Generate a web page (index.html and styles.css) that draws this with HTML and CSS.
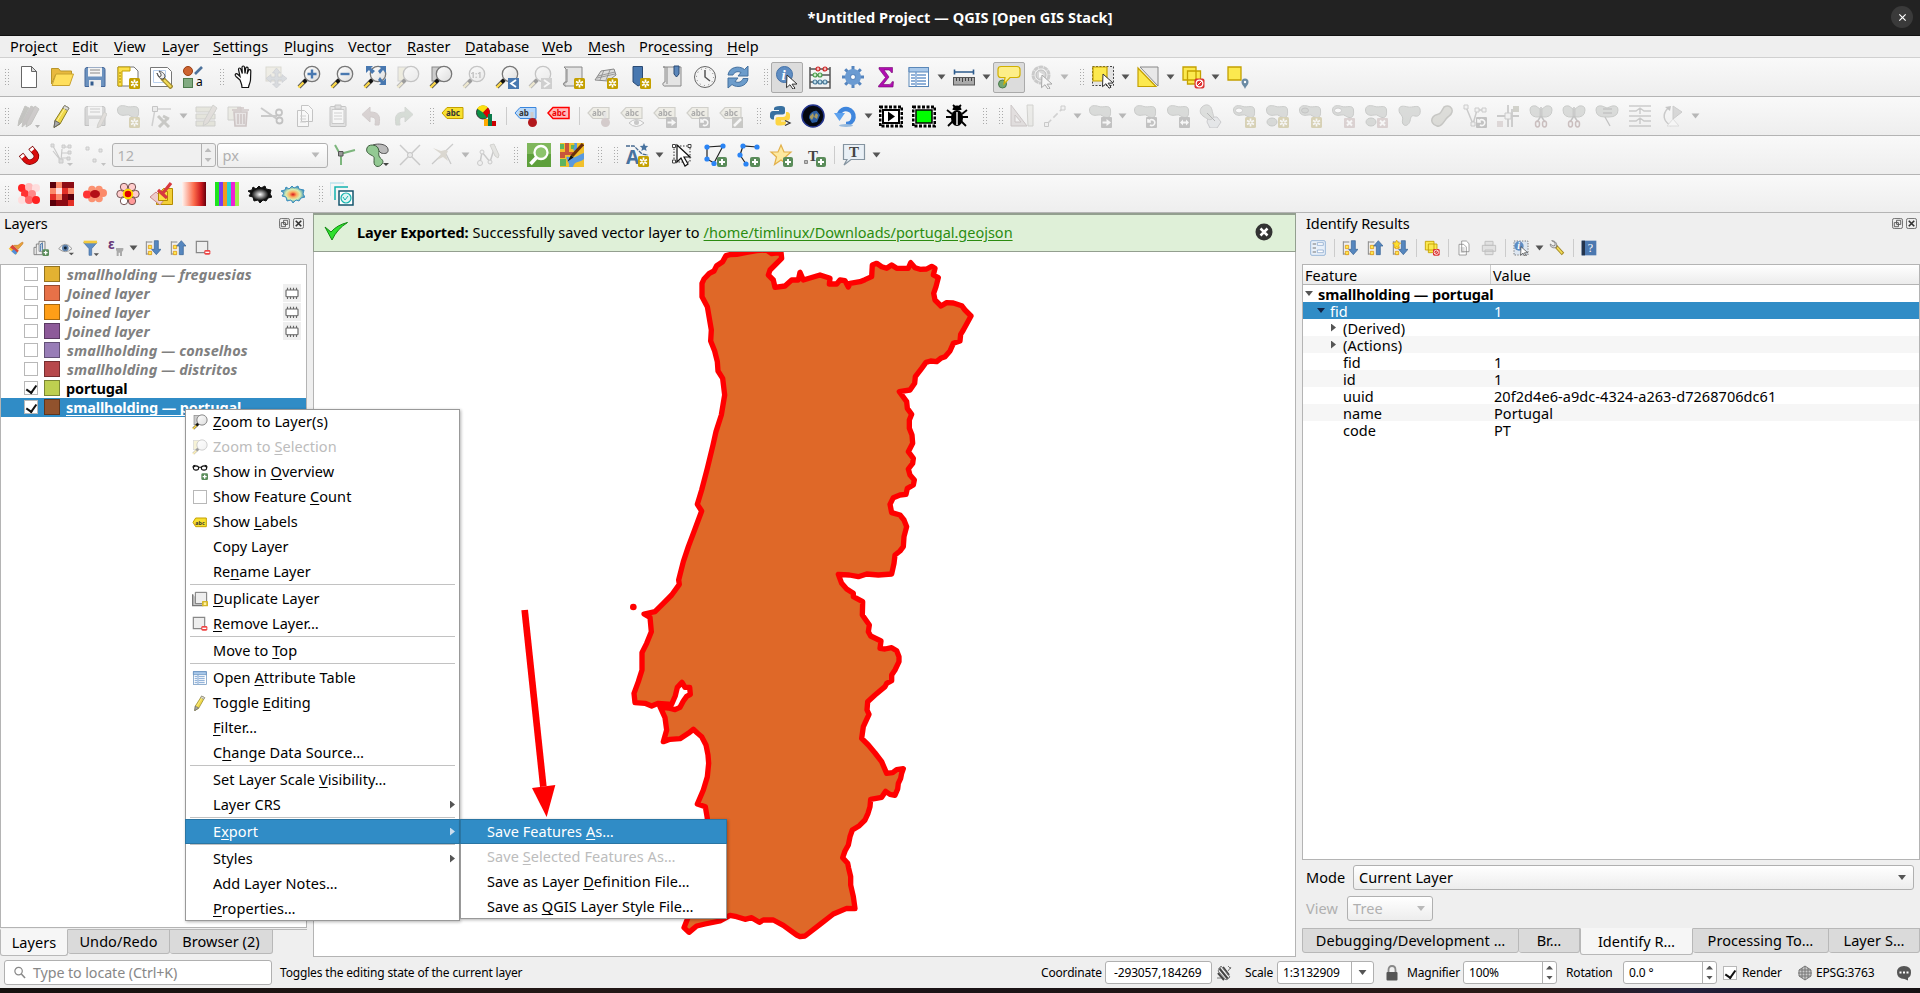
FILE: index.html
```html
<!DOCTYPE html>
<html lang="en">
<head>
<meta charset="utf-8">
<title>*Untitled Project — QGIS [Open GIS Stack]</title>
<link rel="stylesheet" href="styles.css">
</head>
<body>
<svg class="defs" width="0" height="0">
<defs>
<linearGradient id="lens" x1="0" y1="0" x2="1" y2="1"><stop offset="0" stop-color="#fff"/><stop offset="1" stop-color="#ddd"/></linearGradient>
<linearGradient id="reds"><stop offset="0" stop-color="#fff5f0"/><stop offset=".5" stop-color="#fb6a4a"/><stop offset=".8" stop-color="#cb181d"/><stop offset="1" stop-color="#67000d"/></linearGradient>
<radialGradient id="heat"><stop offset="0" stop-color="#d7191c"/><stop offset=".3" stop-color="#fdae61"/><stop offset=".6" stop-color="#d8eeb0"/><stop offset="1" stop-color="#2b83ba"/></radialGradient>
<radialGradient id="heatg"><stop offset="0" stop-color="#fff"/><stop offset=".35" stop-color="#888"/><stop offset=".7" stop-color="#111"/></radialGradient>
<g id="lensg"><path d="M9 15 2 22" stroke="#555" stroke-width="4"/><path d="M8 16 1.5 22.5" stroke="#fcd94a" stroke-width="2.4"/><path d="M9.500 14.500 6.500 17.500" stroke="#111" stroke-width="3.500"/><circle cx="15" cy="9" r="7.700" fill="url(#lens)" stroke="#777" stroke-width="1.300"/></g>
<g id="star"><rect x="13" y="13" width="11" height="11" rx="1.500" fill="#c4a000"/><path d="M18.500 14.500v8M15 16.500l7 4M22 16.500l-7 4" stroke="#fff" stroke-width="1.700"/><circle cx="18.500" cy="18.500" r="1.100" fill="#c4a000"/></g>
<g id="plus"><rect x="14" y="14" width="10" height="10" rx="2" fill="#5a8c5a"/><path d="M19 16v6M16 19h6" stroke="#fff" stroke-width="2"/></g>
<g id="bx"><rect x="13" y="14" width="11" height="10" rx="1" fill="#c99"/><path d="M16 16.500l5 5M21 16.500l-5 5" stroke="#fff" stroke-width="2"/></g>
<g id="bar"><rect x="13" y="13" width="11" height="11" rx="1" fill="#777"/><path d="M14.500 17.500h4V15l4.500 3.500L18.500 22v-2.500h-4z" fill="#fff"/></g>
<g id="blr"><rect x="13" y="13" width="11" height="11" rx="1" fill="#777"/><path d="M14 18.500l3-3v2h3v-2l3 3-3 3v-2h-3v2z" fill="#fff"/></g>
<g id="brot"><rect x="13" y="13" width="11" height="11" rx="1" fill="#777"/><path d="M16 17.500a3 3 0 1 1 1 3.500M15 15v3h3" fill="none" stroke="#fff" stroke-width="1.600"/></g>
<g id="blob"><path d="M1.500 6C1.500 1 7 1 11 2.500S22 0 22.500 6s-1 8-4.500 7.500S14 10 10 11s-8.500 0-8.500-5z" fill="#aab3aa" stroke="#808880"/></g>
<g id="cur"><path d="M12 10l10 9-5 .2 3 4-2 1-3-4.500-3.500 3z" fill="#fff" stroke="#333" stroke-width="1"/></g>
<g id="tag"><path d="M1 7l5-5.500h16v11H6z" fill="#e8e2b8" stroke="#999577" stroke-width="1.200"/><text x="5" y="10" class="abc">abc</text></g>
<symbol id="new" viewBox="0 0 24 24"><path d="M4.500 1.500h10l5 5v16h-15z" fill="#fff" stroke="#666"/><path d="M14.500 1.500v5h5z" fill="#ddd" stroke="#666"/></symbol>
<symbol id="open" viewBox="0 0 24 24"><path d="M1.500 3.500h7l2 2.500h11v4h-16l-4 9z" fill="#e8b93e" stroke="#b8952a"/><path d="M6 9h17.500L19.500 20.500H2z" fill="#ffdf5d" stroke="#c9a22e"/></symbol>
<symbol id="save" viewBox="0 0 24 24"><path d="M2 4.500q0-2 2-2h16q2 0 2 2v17H2z" fill="#6c92bf" stroke="#47689a"/><path d="M5 2.500h14v9H5z" fill="#f4f4f4"/><path d="M7 5h10M7 8h10" stroke="#888"/><path d="M6 15h12v7H6z" fill="#eee"/><path d="M7.500 16.500h3v4h-3z" fill="#335c8f"/></symbol>
<symbol id="newlay" viewBox="0 0 24 24"><path d="M2 2h16l4 4v15H2z" fill="#fff" stroke="#777"/><path d="M2 2h12v4H6v15H2z" fill="#fce04d" stroke="#c4a000"/><path d="M3 8h2M3 11h2M3 14h2M3 17h2" stroke="#a68500"/><use href="#star"/></symbol>
<symbol id="laymgr" viewBox="0 0 24 24"><path d="M1.500 2.500h17l4 4v15h-21z" fill="#fff" stroke="#777"/><path d="M4.500 5.500h12v12h-12z" fill="none" stroke="#b9d0ee"/><path d="M13 13l10 10" stroke="#a08a30" stroke-width="4.500"/><path d="M15 15l7 7" stroke="#f2dc58" stroke-width="2.200"/><path d="M8 8c1 4 3 6 6 6l2-2c0-3-2-5-6-6l2 3v2l-2 1z" fill="#eee" stroke="#555"/></symbol>
<symbol id="style" viewBox="0 0 24 24"><circle cx="6" cy="6" r="4.500" fill="#cd6430" stroke="#9a3e12"/><rect x="1.500" y="13.500" width="9" height="9" fill="#82ab82" stroke="#4c7a4c"/><path d="M13 9l7-7" stroke="#4e739c" stroke-width="2.600"/><text x="14" y="21" class="t11">a</text></symbol>
<symbol id="hand" viewBox="0 0 24 24"><path d="M9 15 5 11.500c-2-2 0-4 2-2l2 2L7.500 4.500c0-2 2-2 2.500 0l1.300 4-.3-6c0-2 2.500-2 2.500 0l.5 6 .8-5.500c.3-1.500 2.500-1 2.300.5L16 9l1.500-3.500c.6-1.500 2.500-1 2.300.8L19.500 15c-.5 4-1.500 4-2 7.500H11C11 19 10 18 9 15z" fill="#fff" stroke="#111" stroke-width="1.200"/></symbol>
<symbol id="panmap" viewBox="0 0 24 24"><rect x="2" y="2" width="15" height="14" fill="#eae2b5" stroke="#b5ad86"/><path d="M12.500 3l4 5h-2.500v4h4V9.500l5 4-5 4V15h-4v4h2.500l-4 4-4-4H11v-4H7v2.500l-5-4 5-4V12h4V8H8.500z" fill="#aab8cc" stroke="#8794ab" stroke-width=".7"/></symbol>
<symbol id="zin" viewBox="0 0 24 24"><use href="#lensg"/><path d="M15 4.500v9M10.500 9h9" stroke="#4878b0" stroke-width="2.400"/></symbol>
<symbol id="zout" viewBox="0 0 24 24"><use href="#lensg"/><path d="M10.500 9h9" stroke="#4878b0" stroke-width="2.400"/></symbol>
<symbol id="zfull" viewBox="0 0 24 24"><use href="#lensg"/><path d="M3 1h7L8 3l4 3-3 3-3-4-3 3zM23 1h-7l2 2-3 3 2 3 3-4 3 3zM23 20h-7l2-2-3-3 2-3 3 4 3-3z" fill="#4878b0"/></symbol>
<symbol id="zsel" viewBox="0 0 24 24"><rect x="2" y="2" width="12" height="14" fill="#eadf9a" stroke="#999"/><use href="#lensg"/></symbol>
<symbol id="zlay" viewBox="0 0 24 24"><rect x="3" y="2" width="12" height="14" fill="#ccc" stroke="#888"/><use href="#lensg"/></symbol>
<symbol id="znat" viewBox="0 0 24 24"><use href="#lensg"/><text x="8.500" y="12.500" class="b9">1:1</text></symbol>
<symbol id="zlast" viewBox="0 0 24 24"><use href="#lensg"/><rect x="13" y="13" width="11" height="11" fill="#4878b0"/><path d="M21 15l-5 3.500 5 3.500" fill="none" stroke="#fff" stroke-width="1.800"/></symbol>
<symbol id="znext" viewBox="0 0 24 24"><use href="#lensg"/><rect x="13" y="13" width="11" height="11" fill="#999"/><path d="M16 15l5 3.500-5 3.500" fill="none" stroke="#fff" stroke-width="1.800"/></symbol>
<symbol id="newmap" viewBox="0 0 24 24"><path d="M3 2h18v19H6c-4 1-5-4-1-4V4z" fill="#e4e4e4" stroke="#888"/><path d="M6 4v13c-4 0-4 4-1 4" fill="#ccc" stroke="#888"/><use href="#star"/></symbol>
<symbol id="new3d" viewBox="0 0 24 24"><path d="M1 15 7 6l13-2 2 6-8 6z" fill="#ddd" stroke="#888"/><path d="M4 11l17-4M6 15l4-10M12 15l4-10M3 13l18-4" stroke="#888" stroke-width=".8"/><use href="#star"/></symbol>
<symbol id="bmk" viewBox="0 0 24 24"><path d="M6 1.500h9.500v17L11 21l-5-4z" fill="#4878b0" stroke="#2a4a74"/><use href="#star"/></symbol>
<symbol id="bmks" viewBox="0 0 24 24"><path d="M3 2h18v19H6c-4 1-4-4-1-4V2z" fill="#e4e4e4" stroke="#888"/><path d="M7 2v17" stroke="#888"/><path d="M14 1h5v8l-2.500 3L14 9z" fill="#5a86ba" stroke="#2a4a74"/></symbol>
<symbol id="clock" viewBox="0 0 24 24"><circle cx="12" cy="12" r="10.500" fill="#f4f4f4" stroke="#666"/><path d="M12 5v7l5 4" fill="none" stroke="#555" stroke-width="1.500"/><circle cx="12" cy="12" r="8.500" fill="none" stroke="#777" stroke-width="1" stroke-dasharray="1 3.450"/></symbol>
<symbol id="refresh" viewBox="0 0 24 24"><path d="M2 10C3 2 13 0 18.500 4.500L22 1v10H12l3-3.500c-4-2-7 0-8 2.500z" fill="#6c9ccb" stroke="#43709f"/><path d="M22 13.500c-1 8-11 10-16 6L2 23V13h10l-3 3.500c4 2 7 0 8-3z" fill="#6c9ccb" stroke="#43709f"/></symbol>
<symbol id="ident" viewBox="0 0 24 24"><circle cx="9.500" cy="9.500" r="8" fill="#5f8dc2" stroke="#4371a8"/><text x="6.500" y="15" class="ii">i</text><use href="#cur"/></symbol>
<symbol id="abacus" viewBox="0 0 24 24"><path d="M2 2v21h20V2M2 4h20M2 10h20M2 17h20" fill="none" stroke="#555" stroke-width="1.500"/><g stroke-width="1.200"><g fill="#f6b8b8" stroke="#c22"><circle cx="10" cy="4" r="2"/><circle cx="17" cy="4" r="2"/></g><g fill="#c8f0c8" stroke="#4a9a4a"><circle cx="7" cy="10" r="2"/><circle cx="12" cy="10" r="2"/></g><g fill="#bfe0ee" stroke="#4a7a9a"><circle cx="7" cy="17" r="2"/><circle cx="12" cy="17" r="2"/><circle cx="17" cy="17" r="2"/></g></g></symbol>
<symbol id="gear" viewBox="0 0 24 24"><path d="M12 1v22M1 12h22M4.200 4.200l15.600 15.600M19.800 4.200 4.200 19.800" stroke="#5585bf" stroke-width="3"/><circle cx="12" cy="12" r="5.500" fill="none" stroke="#6b9bd2" stroke-width="5"/><circle cx="12" cy="12" r="2.500" fill="#fff" stroke="#5585bf"/></symbol>
<symbol id="sigma" viewBox="0 0 24 24"><path d="M5 2.500h13.500v5h-1.300q-.5-2.500-2.700-2.500H10l5 7-6 7.500h6q2.500 0 3-2.800h1.500l-.5 5.300H4.500v-1l7-8.500L5 4z" fill="#b10db1" stroke="#70086f" stroke-width=".6"/></symbol>
<symbol id="table" viewBox="0 0 24 24"><rect x="2" y="2.500" width="19.500" height="19" fill="#fff" stroke="#5a87b8"/><path d="M2 2.500h19.500v4.500H2z" fill="#a8c8ea" stroke="#5a87b8"/><path d="M4 10h4M10 10h9M4 13h4M10 13h9M4 16h4M10 16h9M4 19h4M10 19h9M9 7v14" stroke="#6c98cc" stroke-width="1.300"/></symbol>
<symbol id="ruler" viewBox="0 0 24 24"><path d="M2 7h20M2.500 4.500v5M21.500 4.500v5" stroke="#2d5b8c" stroke-width="1.600"/><rect x="1.500" y="12.500" width="21" height="7.500" fill="#aaa" stroke="#555"/><path d="M4.500 13v3M7.500 13v3M10.500 13v4M13.500 13v3M16.500 13v3M19.500 13v3" stroke="#444"/></symbol>
<symbol id="tip" viewBox="0 0 24 24"><circle cx="5.500" cy="19" r="4" fill="#73a673" stroke="#4a7a4a"/><path d="M4 1.500h16q3 0 3 3v5q0 3-3 3h-7L7 19l1-6.500H4q-3 0-3-3v-5q0-3 3-3z" fill="#fdee88" stroke="#d1b000" stroke-width="1.200"/></symbol>
<symbol id="action" viewBox="0 0 24 24"><circle cx="11" cy="10" r="8" fill="#eee" stroke="#888" stroke-width="3" stroke-dasharray="4.500 .5"/><circle cx="11" cy="10" r="5" fill="#aaa" stroke="#666"/><path d="M9 7l5 3-5 3z" fill="#fff"/><use href="#cur"/></symbol>
<symbol id="select" viewBox="0 0 24 24"><rect x="1.500" y="1.500" width="21" height="19" fill="#e4e4e4" stroke="#444" stroke-dasharray="2 1.500"/><path d="M2 2h14v14H2z" fill="#fce94f" stroke="#c4a000" stroke-width="1.200"/><use href="#cur" y="-1"/></symbol>
<symbol id="selval" viewBox="0 0 24 24"><path d="M4 2h18v19z" fill="#e8e8e8" stroke="#888"/><path d="M2 3l18 18.500H2z" fill="#fce94f" stroke="#c4a000" stroke-width="1.200"/></symbol>
<symbol id="desel" viewBox="0 0 24 24"><path d="M2 2h13v13H2zM6.500 6h13v13h-13z" fill="#fce94f" stroke="#c4a000" stroke-width="1.300"/><rect x="13.500" y="13.500" width="10" height="10" rx="2" fill="#d33"/><circle cx="18.500" cy="18.500" r="3.300" fill="none" stroke="#fff" stroke-width="1.200"/><path d="M21 16l-5 5" stroke="#fff"/></symbol>
<symbol id="selloc" viewBox="0 0 24 24"><path d="M2 2h13v13H2z" fill="#fce94f" stroke="#c4a000" stroke-width="1.300"/><path d="M19 24c-1-3-3.500-4-3.500-7a3.500 3.500 0 0 1 7 0c0 3-2.500 4-3.500 7z" fill="#6b8ba4"/><circle cx="19" cy="17" r="1.200" fill="#fff"/></symbol>
<symbol id="pencils" viewBox="0 0 24 24"><g stroke="#776" stroke-width="1"><path d="M8 2l4 2-7 14-4 4 1-6z" fill="#776"/><path d="M14 2l4 2-8 15-5 4 1-6z" fill="#877"/><path d="M18 2l4 3-8 15-5 3 1-5z" fill="#988"/></g><path d="M18 21h5l-2.500 3z" fill="#555"/></symbol>
<symbol id="pencil" viewBox="0 0 24 24"><path d="M14.500 1.500l4.500 2.500-9 16-6 3.500 1-7z" fill="#f0d94a" stroke="#8a7d22"/><path d="M14.500 1.500l4.500 2.500-1.500 2.500-4.500-2.500z" fill="#ddd" stroke="#888"/><path d="M5 16.500l5 3-6 4z" fill="#aaa" stroke="#666"/><path d="M7 17l8-13" stroke="#fff3a0"/></symbol>
<symbol id="savee" viewBox="0 0 24 24"><path d="M2 4.500q0-2 2-2h16q2 0 2 2v17H2z" fill="#aaa" stroke="#777"/><path d="M5 2.500h14v9H5z" fill="#f4f4f4"/><path d="M7 5h10M7 8h10" stroke="#888"/><path d="M6 15h12v7H6z" fill="#eee"/><path d="M21 8l3 2-6 12-4 2 1-4z" fill="#cba" stroke="#998"/></symbol>
<symbol id="addpoly" viewBox="0 0 24 24"><use href="#blob"/><use href="#star"/></symbol>
<symbol id="vertex" viewBox="0 0 24 24"><path d="M3 22 6 5h16" fill="none" stroke="#999" stroke-width="1.500"/><path d="M3.500 2.500h5v5h-5z" fill="#ddd" stroke="#777"/><path d="M10 23l9-9M14 12l6 3M9 12l11 11" stroke="#887" stroke-width="3"/></symbol>
<symbol id="multi" viewBox="0 0 24 24"><path d="M2 3h19v5H2zM2 10h19v5H2zM2 17h19v5H2z" fill="#cfcf9f" stroke="#998"/><path d="M19 1l4 3-9 15-5 3 1-5z" fill="#cba" stroke="#998"/></symbol>
<symbol id="trash" viewBox="0 0 24 24"><path d="M1 3h13v13H1z" fill="#ddb" stroke="#998"/><path d="M5 6h17M10 4h7M7 8h13l-1 14H8zM11 10v10M14 10v10M17 10v10" fill="#dcc" stroke="#a77" stroke-width="1.600"/></symbol>
<symbol id="cut" viewBox="0 0 24 24"><path d="M1 4l16 11M1 12h16" stroke="#888" stroke-width="2"/><circle cx="19" cy="8.500" r="3" fill="none" stroke="#777" stroke-width="1.800"/><circle cx="19.500" cy="16.500" r="3" fill="none" stroke="#777" stroke-width="1.800"/></symbol>
<symbol id="copy" viewBox="0 0 24 24"><path d="M8.500 1.500h7l4 4v12h-11zM4.500 6.500h7l4 4v12h-11z" fill="#fff" stroke="#777"/><path d="M7 12h6M7 15h6M7 18h6" stroke="#999"/></symbol>
<symbol id="paste" viewBox="0 0 24 24"><rect x="4" y="2.500" width="16" height="20" rx="1" fill="#ccc" stroke="#777"/><path d="M6 5.500h12v14H6z" fill="#fff" stroke="#888"/><path d="M9 1h6v4H9z" fill="#bbb" stroke="#777"/><path d="M8 9h8M8 12h8M8 15h8" stroke="#999"/></symbol>
<symbol id="undo" viewBox="0 0 24 24"><path d="M11 3v5c8 0 11 3 9 13h-4c1-7 0-8-5-8v5L3 10.500z" fill="#b99" stroke="#a88"/></symbol>
<symbol id="redo" viewBox="0 0 24 24"><path d="M13 3v5c-8 0-11 3-9 13h4c-1-7 0-8 5-8v5l8-7.500z" fill="#9b9" stroke="#9a9"/></symbol>
<symbol id="label" viewBox="0 0 24 24"><path d="M1 9l5-5.500h16v11H6z" fill="#f8e02e" stroke="#c4a000"/><text x="5" y="12" class="abc">abc</text></symbol>
<symbol id="label2" viewBox="0 0 24 24"><path d="M1.500 12.500l4-6.500h16v13h-16z" fill="#f8e02e" stroke="#c4a000" stroke-width="1.500"/><text x="5" y="16" class="abc">abc</text></symbol>
<symbol id="diag" viewBox="0 0 24 24"><circle cx="9" cy="8.500" r="6.500" fill="#0c8f45" stroke="#333"/><path d="M9 8.500 3 4.500a7 7 0 0 1 11-1z" fill="#fce010"/><path d="M9 8.500l5-5a7 7 0 0 1-1 10z" fill="#d00"/><path d="M10 15h4v7h-4z" fill="#fa0"/><path d="M14 10h4v12h-4z" fill="#0a7a4a"/><path d="M18 17h4v5h-4z" fill="#c00"/></symbol>
<symbol id="pinlab" viewBox="0 0 24 24"><path d="M1 9l5-5.500h16v11H6z" fill="#b8d8fa" stroke="#3a86dd"/><text x="5" y="12" class="abc">ab</text><path d="M18 8v9" stroke="#ccc" stroke-width="3"/><circle cx="18.500" cy="18.500" r="4.500" fill="#b2181c"/></symbol>
<symbol id="redlab" viewBox="0 0 24 24"><path d="M1 9l5-5.500h16v11H6z" fill="#fbb" stroke="#f00" stroke-width="1.500"/><text x="5" y="12" class="abc red">abc</text></symbol>
<symbol id="l1" viewBox="0 0 24 24"><use href="#tag" y="2"/><path d="M18 8v9" stroke="#ccc" stroke-width="3"/><circle cx="18.500" cy="18.500" r="4.500" fill="#b88"/></symbol>
<symbol id="l2" viewBox="0 0 24 24"><use href="#tag" y="2"/><path d="M9 19q7-7 15 0-8 7-15 0z" fill="#fff" stroke="#777"/><circle cx="16.500" cy="18.500" r="2.500" fill="#888"/></symbol>
<symbol id="l3" viewBox="0 0 24 24"><use href="#tag" y="2"/><use href="#bar"/></symbol>
<symbol id="l4" viewBox="0 0 24 24"><use href="#tag" y="2"/><use href="#brot"/></symbol>
<symbol id="l5" viewBox="0 0 24 24"><use href="#tag" y="2"/><rect x="13" y="13" width="11" height="11" fill="#887"/><path d="M15 22l7-7" stroke="#fff" stroke-width="2.500"/></symbol>
<symbol id="python" viewBox="0 0 24 24"><path d="M12 2q5-.5 5 2.500v4q0 2-2.500 2H9q-3 0-3 3v2H4.500q-3-.5-2.500-5 0-3.500 3-3.500h6V6H6V4.500Q6 2 12 2z" fill="#3870a0"/><path d="M12.500 21.500q-5 .5-5-2.500v-4q0-2 2.500-2h5q3 0 3-3V8h1.500q3 .5 2.500 5 0 3.500-3 3.500h-6v1h5V19q0 2.500-5.500 2.500z" fill="#fdd543"/><path d="M17 16.500l5 2.500-5 2.500" fill="none" stroke="#333" stroke-width="1.300"/></symbol>
<symbol id="globe" viewBox="0 0 24 24"><circle cx="12" cy="12" r="11" fill="#05080f" stroke="#23348c" stroke-width="1.500"/><path d="M8 14c0-5 5-8 8-7l3 4-3 7-5 1z" fill="#2a5ca0"/><path d="M9 12l3-3 1 3-2 4-2-2zM15 9l2 2-1 4-3-2z" fill="#a99a60"/></symbol>
<symbol id="reload" viewBox="0 0 24 24"><path d="M5 10a7.500 7.500 0 1 1 7 10" fill="none" stroke="#3f86dd" stroke-width="4.500"/><path d="M0 9h11l-5.500 8z" fill="#5ea2ee"/><ellipse cx="12" cy="21.500" rx="7" ry="1.500" fill="#9bd"/></symbol>
<symbol id="film" viewBox="0 0 24 24"><path d="M1 2h22v20H1z" fill="#fff"/><path d="M1 3h22v19H1z" fill="none" stroke="#000" stroke-width="3" stroke-dasharray="3 1.500"/><path d="M4 6h16v13H4z" fill="#fff" stroke="#000" stroke-width="2"/><path d="M9 7.500l7 5-7 5z"/></symbol>
<symbol id="filmg" viewBox="0 0 24 24"><path d="M1 2h22v20H1z" fill="#fff"/><path d="M1 3h22v19H1z" fill="none" stroke="#000" stroke-width="3" stroke-dasharray="3 1.500"/><path d="M4 6h16v13H4z" fill="#0f0" stroke="#000" stroke-width="1.500"/></symbol>
<symbol id="bug" viewBox="0 0 24 24"><path d="M7.500 6a4.500 4.500 0 0 1 9 0z"/><ellipse cx="12" cy="14" rx="6" ry="8"/><path d="M8 1l3 3M16 1l-3 3M2 6l5 4M22 6l-5 4M1 13h22M3 22l5-5M21 22l-5-5" stroke="#000" stroke-width="1.800"/><path d="M12 8v13" stroke="#eee" stroke-width="1.500"/></symbol>
<symbol id="tri" viewBox="0 0 24 24"><path d="M1 1v21h16zM5 11v7h6z" fill="#cbb" fill-rule="evenodd" stroke="#977"/><path d="M17 1h6v21h-5z" fill="#ddc" stroke="#998"/></symbol>
<symbol id="seg" viewBox="0 0 24 24"><path d="M4 20 20 4" stroke="#999" stroke-width="1.500" stroke-dasharray="6 3"/><path d="M1.500 18.500h4v4h-4zM18 2h4v4h-4z" fill="#eee" stroke="#888"/></symbol>
<symbol id="mv" viewBox="0 0 24 24"><use href="#blob"/><use href="#bar"/></symbol>
<symbol id="mvlr" viewBox="0 0 24 24"><use href="#blob"/><use href="#blr"/></symbol>
<symbol id="rot" viewBox="0 0 24 24"><use href="#blob"/><use href="#brot"/></symbol>
<symbol id="simp" viewBox="0 0 24 24"><path d="M9 13h9l4 5-4 6h-7l-3-6z" fill="#ccd6e0" stroke="#889"/><path d="M3 3c4-4 9-2 10 3s3 7 0 9-6-1-9-3-4-6-1-9z" fill="#b4bcb4" stroke="#888"/><path d="M8 9l8 8" stroke="#555"/></symbol>
<symbol id="ring" viewBox="0 0 24 24"><use href="#blob"/><ellipse cx="7" cy="6.500" rx="3.500" ry="2.500" fill="#fff" stroke="#888"/><use href="#star"/></symbol>
<symbol id="fring" viewBox="0 0 24 24"><use href="#blob"/><ellipse cx="7" cy="6.500" rx="3.500" ry="2.500" fill="#9aa49a" stroke="#777"/><use href="#star"/></symbol>
<symbol id="part" viewBox="0 0 24 24"><use href="#blob"/><ellipse cx="7" cy="18" rx="5" ry="4" fill="#aab3aa" stroke="#808880"/><use href="#star"/></symbol>
<symbol id="dring" viewBox="0 0 24 24"><use href="#blob"/><ellipse cx="7" cy="6.500" rx="3.500" ry="2.500" fill="#fff" stroke="#888"/><use href="#bx"/></symbol>
<symbol id="dpart" viewBox="0 0 24 24"><use href="#blob"/><ellipse cx="7" cy="18" rx="5" ry="4" fill="#aab3aa" stroke="#808880"/><use href="#bx"/></symbol>
<symbol id="reshape" viewBox="0 0 24 24"><path d="M2 6c0-5 5-4 9-3s11-3 12 2-1 8-5 7-4 1-5 5-5 6-7 3 1-5-1-8-3-3-3-6z" fill="#aab3aa" stroke="#808880"/></symbol>
<symbol id="offs" viewBox="0 0 24 24"><path d="M14 3c5-3 9 1 8 5s-3 3-6 7-5 8-9 7-7-5-4-9 6-1 8-5z" fill="#b8b8a4" stroke="#808070" stroke-width="1.500"/></symbol>
<symbol id="veer" viewBox="0 0 24 24"><path d="M3 3l7 17 4-14h8" fill="none" stroke="#888" stroke-width="1.500"/><path d="M1 1h4v4H1zM12 4h4v4h-4zM19 4h4v4h-4zM8 18h4v4H8z" fill="#eee" stroke="#888"/><use href="#brot"/></symbol>
<symbol id="snapv" viewBox="0 0 24 24"><path d="M3 3l8 15 1-12M11 10h10M12 15h8M12 4h9M3 8l8 10" fill="none" stroke="#888" stroke-width="1.200"/><path d="M1 1h3v3H1zM12 2h3v3h-3zM18 2h3v3h-3zM18 8h3v3h-3zM17 14h3v3h-3zM9 16h4v4H9z" fill="#bbb" stroke="#888"/><path d="M17 20h6l-3 3z" fill="#777"/></symbol>
<symbol id="cross" viewBox="0 0 24 24"><path d="M1 12h22M12 1v22M16 5v18" stroke="#888" stroke-width="1.800"/><path d="M9 9h6v6H9z" fill="#eee" stroke="#888"/><path d="M17 2h6v6h-6z" fill="#997"/><path d="M1 17h6v6H1z" fill="#caa"/></symbol>
<symbol id="split" viewBox="0 0 24 24"><path d="M1 6q0-5 6-4l4 3v8q-10 1-10-7zM23 6q0-5-6-4l-4 3v8q10 1 10-7z" fill="#aab3aa" stroke="#808880"/><path d="M12 3v9l-4 6M12 12l4 6" stroke="#777" stroke-width="1.500" fill="none"/><ellipse cx="8.500" cy="20" rx="2" ry="3" fill="none" stroke="#a66" stroke-width="1.500"/><ellipse cx="15.500" cy="20" rx="2" ry="3" fill="none" stroke="#a66" stroke-width="1.500"/></symbol>
<symbol id="merge" viewBox="0 0 24 24"><path d="M1 6q0-5 6-4l5 2 5-2q6-1 6 4 0 7-9 7H10Q1 13 1 6z" fill="#aab3aa" stroke="#808880"/><path d="M8 5h9M8 9h9M10 13l5 9" stroke="#777" stroke-width="1.300"/></symbol>
<symbol id="trim" viewBox="0 0 24 24"><path d="M1 2h22M1 12h22M1 22h22M1 7h7l4-3 4 3h7M1 17h7l4-3 4 3h7M12 4v6M12 14v6" stroke="#888" stroke-width="1.400" fill="none"/></symbol>
<symbol id="rotp" viewBox="0 0 24 24"><path d="M10 22Q-2 14 7 4" fill="none" stroke="#888" stroke-width="1.500"/><path d="M4 3l6-1-1 5z" fill="#777"/><path d="M12 2l9 6-9 7z" fill="#aaa" stroke="#888"/><path d="M12 15l6 7H6z" fill="#fff" stroke="#bbb"/></symbol>
<symbol id="magnet" viewBox="0 0 24 24"><g fill="none"><path d="M4 11.500 9 17.500C13 22 22.500 16 18.500 10.500L13.500 4.500" stroke="#700" stroke-width="5.600"/><path d="M4.500 12.200 9 17.500C13 22 22.500 16 18.500 10.500L14 5.200" stroke="#d80c0c" stroke-width="4.200"/><path d="M4.500 12.200l1.800 2.100M14 5.200l1.800 2.100" stroke="#fff" stroke-width="4.200"/></g></symbol>
<symbol id="dots" viewBox="0 0 24 24"><path d="M3 4h3v3H3zM16 6h3v3h-3zM10 16h3v3h-3z" fill="#ccc" stroke="#888"/><path d="M18 20h5l-2.500 3z" fill="#777"/></symbol>
<symbol id="topo" viewBox="0 0 24 24"><path d="M3 2l5 9 15-4M9 11v11" fill="none" stroke="#7db67d" stroke-width="2"/><path d="M6.500 8.500H11V13H6.500z" fill="#999" stroke="#555"/></symbol>
<symbol id="avoid" viewBox="0 0 24 24"><path d="M8 2c5-2 14-1 15 4s-4 5-7 4z" fill="#bbb" stroke="#555"/><path d="M2 5c1-4 9-4 11 0s0 5 1 8 6 4 3 8-8 3-8-2 1-5-3-7-5-4-4-7z" fill="#93c993" stroke="#3d5c3d"/><path d="M18 20h6l-3 3z" fill="#444"/></symbol>
<symbol id="xx" viewBox="0 0 24 24"><path d="M2 2l20 20M22 2 2 22" stroke="#888" stroke-width="1.500"/><circle cx="12" cy="12" r="2.500" fill="#ddd" stroke="#777"/></symbol>
<symbol id="selfx" viewBox="0 0 24 24"><path d="M22 1 1 21M15 11l5 10" fill="none" stroke="#888" stroke-width="1.300"/><path d="M2 5l8 3 4-1 3 1-2 4 2 6-5-4-6 3 4-6z" fill="#bbaa80"/></symbol>
<symbol id="trace" viewBox="0 0 24 24"><path d="M4 20 6 9l8 10L19 3" fill="none" stroke="#888" stroke-width="1.500"/><circle cx="4" cy="20" r="2.500" fill="#eee" stroke="#888"/><circle cx="6" cy="9" r="2" fill="#eee" stroke="#888"/><circle cx="14" cy="19" r="2" fill="#eee" stroke="#888"/><path d="M14 2l4-1 5 11-1 3-3-2z" fill="#ccb" stroke="#998"/></symbol>
<symbol id="osm" viewBox="0 0 24 24"><rect width="24" height="24" fill="#5ea03c"/><rect width="24" height="11" fill="#7fb75c"/><circle cx="14" cy="9.500" r="6.500" fill="#8cc46c" stroke="#fff" stroke-width="2.300"/><path d="M9.500 14.500 3.500 21" stroke="#fff" stroke-width="3.500"/></symbol>
<symbol id="map" viewBox="0 0 24 24"><rect width="24" height="24" fill="#f1c02c"/><path d="M0 9h5V0h4v9h4v3H5v3H0z" fill="#c8553a"/><path d="M0 1h4v5H0zM0 16h6v7H0zM11 2h4v4h-4z" fill="#5fb45f"/><path d="M24 10c-7 2-8 6-15 4s2 6 0 10h4c2-7 7-4 11-8zM14 0c2 4-2 5 0 8l3-2V0z" fill="#5a9ae0"/><path d="M23 1 12 13" stroke="#6b2e0a" stroke-width="3.200"/><path d="M11 12l2.500 2.500-6 4z" fill="#111"/></symbol>
<symbol id="anno" viewBox="0 0 24 24"><path d="M1 3h8l8 8 6 1" fill="none" stroke="#476a90" stroke-width="1.300" stroke-dasharray="4 1"/><path d="M19 0l1.200 2.700 3 .3-2.200 2 .6 3L19 6.500 16.400 8l.6-3-2.200-2 3-.3z" fill="#47729f"/><text x="1" y="21" class="bigA">A</text><use href="#star"/></symbol>
<symbol id="selanno" viewBox="0 0 24 24"><path d="M4 3h16v16H4z" fill="none" stroke="#333" stroke-dasharray="1.500 1.500"/><path d="M2.500 1.500h3v3h-3zM18 1.500h3v3h-3zM2.500 17h3v3h-3z" fill="#fff" stroke="#444"/><path d="M7 2l13 12h-6l4 7-3 2-4-8-4 4z" fill="#fff" stroke="#111" stroke-width="1.200"/></symbol>
<symbol id="apoly" viewBox="0 0 24 24"><path d="M4 4 20 3 11 20 4 16z" fill="none" stroke="#222" stroke-width="1.200"/><g fill="#2a84f5"><circle cx="4" cy="4" r="2.600"/><circle cx="20" cy="3" r="2.600"/><circle cx="11" cy="20.500" r="2.600"/><circle cx="4" cy="16" r="2.600"/></g><use href="#plus"/></symbol>
<symbol id="aline" viewBox="0 0 24 24"><path d="M21 4 7 3 4 12l6 9" fill="none" stroke="#222" stroke-width="1.200"/><g fill="#2a84f5"><circle cx="21" cy="4" r="2.600"/><circle cx="7" cy="3" r="2.600"/><circle cx="4" cy="12" r="2.600"/><circle cx="10" cy="21" r="2.600"/></g><use href="#plus"/></symbol>
<symbol id="amark" viewBox="0 0 24 24"><path d="M12 2l3 7h7l-5.500 5 2 7.500L12 17l-6.500 4.500 2-7.500L2 9h7z" fill="#fde9a0" stroke="#e2b04a" stroke-width="1.200"/><use href="#plus"/></symbol>
<symbol id="atext" viewBox="0 0 24 24"><text x="6" y="18" class="T15">T</text><path d="M2.500 17.500h3v3h-3z" fill="#bbb" stroke="#888"/><use href="#plus"/></symbol>
<symbol id="tbub" viewBox="0 0 24 24"><path d="M1.500 1.500h21v15H9L2 22l3-5.500H1.500z" fill="#e9f0f6" stroke="#8594a0" stroke-width="1.200"/><text x="7" y="14" class="T15">T</text></symbol>
<symbol id="p1" viewBox="0 0 24 24"><circle cx="5" cy="6" r="4" fill="#f22"/><circle cx="12" cy="5" r="4" fill="#fbb"/><circle cx="19" cy="6" r="4" fill="#fdd"/><circle cx="8" cy="12" r="4" fill="#f33"/><circle cx="15" cy="12" r="4" fill="#f88"/><circle cx="5" cy="18" r="4" fill="#fdd"/><circle cx="12" cy="18" r="4" fill="#f66"/><circle cx="19" cy="18" r="4" fill="#f22"/></symbol>
<symbol id="p2" viewBox="0 0 24 24"><rect width="24" height="24" fill="#8d0b14"/><path d="M6 0h6v6H6zM0 6h6v6H0zM6 12h6v6H6zM12 6h12v6H12z" fill="#fb8a6a"/><path d="M6 6h6v6H6z" fill="#fdd"/><path d="M12 6h6v6h-6zM18 18h6v6h-6zM0 12h6v6H0z" fill="#e32f27"/><path d="M0 0h6v6H0zM18 12h6v6h-6zM0 18h6v6H0z" fill="#5c000b"/></symbol>
<symbol id="p3" viewBox="0 0 24 24"><g fill="#fb9272"><circle cx="9" cy="7.500" r="3.800"/><circle cx="16" cy="7.500" r="3.800"/><circle cx="9" cy="16.500" r="3.800"/><circle cx="16" cy="16.500" r="3.800"/></g><circle cx="4" cy="12.500" r="4" fill="#f33"/><circle cx="20" cy="11" r="4" fill="#fb8a6a"/><ellipse cx="12" cy="12" rx="5" ry="4" fill="#b30f17"/></symbol>
<symbol id="p4" viewBox="0 0 24 24"><g fill="#fcc" stroke="#644" stroke-width=".9"><circle cx="8" cy="5" r="3.700"/><circle cx="16" cy="5" r="3.700"/><circle cx="4.500" cy="12" r="3.700"/><circle cx="19.500" cy="12" r="3.700"/><circle cx="8" cy="19" r="3.700" fill="#fff"/><circle cx="16" cy="19" r="3.700" fill="#f99"/></g><circle cx="12" cy="12" r="4.300" fill="#d00" stroke="#fd0" stroke-width="2"/></symbol>
<symbol id="p5" viewBox="0 0 24 24"><path d="M14.500 6.500h9v16h-16v-8z" fill="#f2cf38" stroke="#b48b00"/><path d="M1 15l6-5 8 8-4 5z" fill="#ecc" stroke="#c88"/><path d="M9.500 9.500h9v9h-9z" fill="#fadf45" stroke="#b48b00"/><path d="M22 1l-8 10M9 8l9 8" stroke="#d8393f" stroke-width="3.200"/></symbol>
<symbol id="p6" viewBox="0 0 24 24"><rect width="24" height="24" fill="url(#reds)"/></symbol>
<symbol id="p7" viewBox="0 0 24 24"><path d="M0 0h4v24H0z" fill="#1ee51e"/><path d="M4 0h4v24H4z" fill="#7a3cf0"/><path d="M8 0h4v24H8z" fill="#f29a1f"/><path d="M12 0h4v24h-4z" fill="#25d3cf"/><path d="M16 0h4v24h-4z" fill="#f01fd5"/><path d="M20 0h4v24h-4z" fill="#9df04a"/></symbol>
<symbol id="p8" viewBox="0 0 24 24"><path d="M0 9l4-1 1-3 3 2 3-3 2 2 4-2 1 3 5 1-1 4 2 3-4 1-2 3-3-1-3 3-2-3-4 1-1-4-4-1 2-3z" fill="url(#heatg)" stroke="#111"/></symbol>
<symbol id="p9" viewBox="0 0 24 24"><path d="M0 9l4-1 1-3 3 2 3-3 2 2 4-2 1 3 5 1-1 4 2 3-4 1-2 3-3-1-3 3-2-3-4 1-1-4-4-1 2-3z" fill="url(#heat)" stroke="#3b8fbe"/></symbol>
<symbol id="p10" viewBox="0 0 24 24"><path d="M0 14V1h14" fill="none" stroke="#bfe3ec" stroke-width="1.500"/><path d="M5 18V5h13" fill="none" stroke="#12b3ae" stroke-width="1.500"/><path d="M9 23V9h14v14z" fill="#fff" stroke="#15566e" stroke-width="1.500"/><circle cx="16" cy="16" r="5" fill="#dff5f3" stroke="#12b3ae" stroke-width="1.200"/><path d="M13 15l2 3 3-4" fill="none" stroke="#12b3ae"/></symbol>
<symbol id="brush" viewBox="0 0 24 24"><path d="M1 13l6-6 9 9-4 6z" fill="#f7c02e"/><path d="M3 11l4-4 9 9-3 3z" fill="#d9443a"/><path d="M5 17l4-3 5 5-3 3z" fill="#4f8fdb"/><path d="M9 8l6 6 7-8q2-4-2-2l-5 4z" fill="#e8a23b" stroke="#c97b22"/></symbol>
<symbol id="addgrp" viewBox="0 0 24 24"><path d="M1.500 22V11H5V6h4V2h9v15H14v5z" fill="#eee" stroke="#777" stroke-width="1.300"/><path d="M5 11v11M9 6v11h9M14 2v10" fill="none" stroke="#777"/><path d="M11 17V8q0-3 3-3v11" stroke="#4878b0" fill="none" stroke-width="1.500"/><use href="#plus"/></symbol>
<symbol id="eye" viewBox="0 0 24 24"><path d="M1 13Q11 0 21 13 11 22 1 13z" fill="#f2f2f2" stroke="#999" stroke-width="1.500"/><circle cx="11" cy="12" r="5" fill="#5f82ac"/><circle cx="11" cy="12" r="2.200" fill="#123"/><path d="M16 19h8l-4 4z" fill="#555"/></symbol>
<symbol id="filter" viewBox="0 0 24 24"><path d="M1 4h20l-8 9v10H9V13z" fill="#5e8ec6" stroke="#466e9f"/><path d="M1 1h20v4H1z" fill="#f3c93c"/><path d="M16 20h8l-4 4z" fill="#555"/></symbol>
<symbol id="eps" viewBox="0 0 24 24"><text x="0" y="14" class="eps">ε</text><path d="M12 12h11v3l-2 3v6h-3v-5h-2v5h-3v-7l-1-2z" fill="#aaa"/></symbol>
<symbol id="expand" viewBox="0 0 24 24"><path d="M2 2v20M2 3h9M2 21h8" stroke="#888" stroke-width="1.500"/><path d="M5 8h5v5H5zM5 17h5v5H5z" fill="#fce94f" stroke="#d80"/><path d="M14 1h6v13h4l-7 8-7-8h4z" fill="#5687bf" stroke="#335f93"/></symbol>
<symbol id="collapse" viewBox="0 0 24 24"><path d="M2 2v20M2 3h9M2 21h8" stroke="#888" stroke-width="1.500"/><path d="M5 8h5v5H5zM5 17h5v5H5z" fill="#fce94f" stroke="#d80"/><path d="M14 22h6V9h4l-7-8-7 8h4z" fill="#5687bf" stroke="#335f93"/></symbol>
<symbol id="expstar" viewBox="0 0 24 24"><use href="#expand"/><path d="M7 0l2 4 4 .5-3 3 1 4.500-4-2-4 2 1-4.500-3-3L5 4z" fill="#fce02f" stroke="#e0a010"/></symbol>
<symbol id="remove" viewBox="0 0 24 24"><path d="M2 2h17v17H2z" fill="#eee" stroke="#888" stroke-width="1.800"/><rect x="14" y="15" width="9" height="7" rx="2" fill="#e44"/><path d="M15.500 18.500h6" stroke="#fff" stroke-width="2"/></symbol>
<symbol id="dup" viewBox="0 0 24 24"><path d="M1 5v17h16" fill="#ccc" stroke="#777" stroke-width="2"/><path d="M5 2h17v17H5z" fill="#eee" stroke="#777" stroke-width="1.500"/><rect x="15" y="15" width="9" height="8" rx="1" fill="#d4b62a"/><path d="M17.500 17h4v4h-4z" fill="#fff3a0"/></symbol>
<symbol id="glass" viewBox="0 0 24 24"><path d="M1 5q1-3 4-3M23 5q-1-3-4-3M10 5h4" fill="none" stroke="#111" stroke-width="1.600"/><ellipse cx="6" cy="6" rx="4" ry="3.200" fill="#fff" stroke="#111" stroke-width="1.600"/><ellipse cx="18" cy="6" rx="4" ry="3.200" fill="#fff" stroke="#111" stroke-width="1.600"/><use href="#plus"/></symbol>
<symbol id="chip" viewBox="0 0 24 24"><rect x="4" y="8" width="16" height="9" rx="1" fill="#fff" stroke="#666" stroke-width="1.500"/><path d="M6 5v3M10 5v3M14 5v3M18 5v3M6 17v3M10 17v3M14 17v3M18 17v3" stroke="#666" stroke-width="1.500"/></symbol>
<symbol id="form" viewBox="0 0 24 24"><rect x="1" y="1" width="22" height="22" rx="2" fill="#e8f0f9" stroke="#9bb7d8" stroke-width="1.500"/><path d="M4 6h5M4 12h5M4 18h5" stroke="#777" stroke-width="1.500"/><path d="M11 4h9v4h-9zM11 15h9v4h-9z" fill="#fff" stroke="#7a9cc6"/></symbol>
<symbol id="print" viewBox="0 0 24 24"><path d="M6 2h12v6H6zM2 8h20v9H2zM6 15h12v7H6z" fill="#ccc" stroke="#777" stroke-width="1.500"/></symbol>
<symbol id="identsel" viewBox="0 0 24 24"><rect x="1.500" y="1.500" width="21" height="21" fill="#dde6f0" stroke="#444" stroke-dasharray="2 2"/><circle cx="9" cy="9" r="7" fill="#5f8dc2"/><text x="6.500" y="14" class="ii">i</text><use href="#cur"/></symbol>
<symbol id="wrench" viewBox="0 0 24 24"><path d="M10 9l11 12" stroke="#a08520" stroke-width="5"/><path d="M12 11l8 9" stroke="#f2dc58" stroke-width="2.500"/><path d="M4 1l5 3v4l-3 1-4-3C1 11 7 13 11 11c2-5-1-10-7-10z" fill="#ddd" stroke="#666"/></symbol>
<symbol id="help" viewBox="0 0 24 24"><path d="M1 1h22v22H1z" fill="#4b78b0"/><path d="M1 1h5v22H1z" fill="#23344c"/><text x="10" y="18" class="q">?</text></symbol>
<symbol id="check" viewBox="0 0 24 24"><path d="M1 7l6 5Q13 5 23.500 2.500 13 9 8 20z" fill="#2ee02e" stroke="#118a11"/></symbol>
<symbol id="float" viewBox="0 0 12 12"><rect x=".5" y=".5" width="11" height="11" rx="2" fill="#eee" stroke="#666"/><path d="M5 2.500h4.500v4.500H5zM2.500 5H7v4.500H2.500z" fill="#eee" stroke="#555"/></symbol>
<symbol id="close" viewBox="0 0 12 12"><rect x=".5" y=".5" width="11" height="11" rx="2" fill="#eee" stroke="#666"/><path d="M3 3l6 6M9 3l-6 6" stroke="#333" stroke-width="1.800"/></symbol>
</defs>
</svg>

<header class="title"><b>*Untitled Project — QGIS [Open GIS Stack]</b><span class="winclose"><svg viewBox="0 0 10 10"><path d="M1.500 1.500l7 7M8.500 1.500l-7 7" stroke="#fff" stroke-width="1.300"/></svg></span></header>
<nav class="menubar"><span>Pro<u>j</u>ect</span><span><u>E</u>dit</span><span><u>V</u>iew</span><span><u>L</u>ayer</span><span><u>S</u>ettings</span><span><u>P</u>lugins</span><span>Vect<u>o</u>r</span><span><u>R</u>aster</span><span><u>D</u>atabase</span><span><u>W</u>eb</span><span><u>M</u>esh</span><span>Pro<u>c</u>essing</span><span><u>H</u>elp</span></nav>

<div class="bar"><i class="grip first"></i><svg><use href="#new"/></svg><svg><use href="#open"/></svg><svg><use href="#save"/></svg><svg><use href="#newlay"/></svg><svg><use href="#laymgr"/></svg><svg><use href="#style"/></svg><i class="grip"></i><svg><use href="#hand"/></svg><svg class="dis"><use href="#panmap"/></svg><svg><use href="#zin"/></svg><svg><use href="#zout"/></svg><svg><use href="#zfull"/></svg><svg class="dis"><use href="#zsel"/></svg><svg><use href="#zlay"/></svg><svg class="dis"><use href="#znat"/></svg><svg><use href="#zlast"/></svg><svg class="dis"><use href="#znext"/></svg><svg><use href="#newmap"/></svg><svg><use href="#new3d"/></svg><svg><use href="#bmk"/></svg><svg><use href="#bmks"/></svg><svg><use href="#clock"/></svg><svg><use href="#refresh"/></svg><i class="grip"></i><span class="on"><svg><use href="#ident"/></svg></span><svg><use href="#abacus"/></svg><svg><use href="#gear"/></svg><svg><use href="#sigma"/></svg><svg><use href="#table"/></svg><i class="dn"></i><svg><use href="#ruler"/></svg><i class="dn"></i><span class="on"><svg><use href="#tip"/></svg></span><svg class="dis"><use href="#action"/></svg><i class="dn dis"></i><i class="grip"></i><svg><use href="#select"/></svg><i class="dn"></i><svg><use href="#selval"/></svg><i class="dn"></i><svg><use href="#desel"/></svg><i class="dn"></i><svg><use href="#selloc"/></svg></div>

<div class="bar"><i class="grip first"></i><svg class="dis"><use href="#pencils"/></svg><svg><use href="#pencil"/></svg><svg class="dis"><use href="#savee"/></svg><svg class="dis"><use href="#addpoly"/></svg><svg class="dis"><use href="#vertex"/></svg><i class="dn dis"></i><svg class="dis"><use href="#multi"/></svg><svg class="dis"><use href="#trash"/></svg><svg class="dis"><use href="#cut"/></svg><svg class="dis"><use href="#copy"/></svg><svg class="dis"><use href="#paste"/></svg><svg class="dis"><use href="#undo"/></svg><svg class="dis"><use href="#redo"/></svg><i class="grip"></i><svg><use href="#label"/></svg><svg><use href="#diag"/></svg><i class="sep"></i><svg><use href="#pinlab"/></svg><svg><use href="#redlab"/></svg><i class="sep"></i><svg class="dis"><use href="#l1"/></svg><svg class="dis"><use href="#l2"/></svg><svg class="dis"><use href="#l3"/></svg><svg class="dis"><use href="#l4"/></svg><svg class="dis"><use href="#l5"/></svg><i class="grip"></i><svg><use href="#python"/></svg><svg><use href="#globe"/></svg><svg><use href="#reload"/></svg><i class="dn"></i><svg><use href="#film"/></svg><svg><use href="#filmg"/></svg><svg><use href="#bug"/></svg><i class="grip"></i><i class="grip"></i><svg class="dis"><use href="#tri"/></svg><svg class="dis"><use href="#seg"/></svg><i class="dn dis"></i><svg class="dis"><use href="#mv"/></svg><i class="dn dis"></i><svg class="dis"><use href="#rot"/></svg><svg class="dis"><use href="#mvlr"/></svg><svg class="dis"><use href="#simp"/></svg><svg class="dis"><use href="#ring"/></svg><svg class="dis"><use href="#part"/></svg><svg class="dis"><use href="#fring"/></svg><svg class="dis"><use href="#dring"/></svg><svg class="dis"><use href="#dpart"/></svg><svg class="dis"><use href="#reshape"/></svg><svg class="dis"><use href="#offs"/></svg><svg class="dis"><use href="#veer"/></svg><svg class="dis"><use href="#cross"/></svg><svg class="dis"><use href="#split"/></svg><svg class="dis"><use href="#split"/></svg><svg class="dis"><use href="#merge"/></svg><svg class="dis"><use href="#trim"/></svg><svg class="dis"><use href="#rotp"/></svg><i class="dn dis"></i></div>

<div class="bar"><i class="grip first"></i><svg><use href="#magnet"/></svg><svg class="dis"><use href="#snapv"/></svg><svg class="dis"><use href="#dots"/></svg><div class="spin off tol"><span>12</span><i class="ud"></i></div><div class="combo off unit"><span>px</span><i class="dn dis"></i></div><svg><use href="#topo"/></svg><svg><use href="#avoid"/></svg><svg class="dis"><use href="#xx"/></svg><svg class="dis"><use href="#selfx"/></svg><i class="dn dis"></i><svg class="dis"><use href="#trace"/></svg><i class="grip wide"></i><svg><use href="#osm"/></svg><svg><use href="#map"/></svg><i class="grip"></i><i class="grip"></i><svg><use href="#anno"/></svg><i class="dn"></i><svg><use href="#selanno"/></svg><svg><use href="#apoly"/></svg><svg><use href="#aline"/></svg><svg><use href="#amark"/></svg><svg><use href="#atext"/></svg><i class="sep"></i><svg><use href="#tbub"/></svg><i class="dn"></i></div>

<div class="bar last"><i class="grip first"></i><svg><use href="#p1"/></svg><svg><use href="#p2"/></svg><svg><use href="#p3"/></svg><svg><use href="#p4"/></svg><svg><use href="#p5"/></svg><svg><use href="#p6"/></svg><svg><use href="#p7"/></svg><svg><use href="#p8"/></svg><svg><use href="#p9"/></svg><i class="grip"></i><svg><use href="#p10"/></svg></div>

<main class="work">
<section class="dock left">
<div class="dhead"><span>Layers</span><svg><use href="#float"/></svg><svg><use href="#close"/></svg></div>
<div class="dbar"><svg><use href="#brush"/></svg><svg><use href="#addgrp"/></svg><svg><use href="#eye"/></svg><svg><use href="#filter"/></svg><svg><use href="#eps"/></svg><i class="dn"></i><svg><use href="#expand"/></svg><svg><use href="#collapse"/></svg><svg><use href="#remove"/></svg></div>
<div class="tree">
<div class="lay"><i class="cb"></i><i class="sw c1"></i><em>smallholding — freguesias</em></div>
<div class="lay"><i class="cb"></i><i class="sw c2"></i><em>Joined layer</em><svg><use href="#chip"/></svg></div>
<div class="lay"><i class="cb"></i><i class="sw c3"></i><em>Joined layer</em><svg><use href="#chip"/></svg></div>
<div class="lay"><i class="cb"></i><i class="sw c4"></i><em>Joined layer</em><svg><use href="#chip"/></svg></div>
<div class="lay"><i class="cb"></i><i class="sw c5"></i><em>smallholding — conselhos</em></div>
<div class="lay"><i class="cb"></i><i class="sw c6"></i><em>smallholding — distritos</em></div>
<div class="lay"><i class="cb ck"></i><i class="sw c7"></i><b>portugal</b></div>
<div class="lay cursel"><i class="cb ck"></i><i class="sw c8"></i><b><u>smallholding — portugal</u></b></div>
</div>
<div class="tabs ltabs"><span class="act">Layers</span><span>Undo/Redo</span><span>Browser (2)</span></div>
</section>

<section class="center">
<div class="msg"><svg><use href="#check"/></svg><b>Layer Exported:</b><span>Successfully saved vector layer to</span><a>/home/timlinux/Downloads/portugal.geojson</a><svg class="mx" viewBox="0 0 18 18"><circle cx="9" cy="9" r="8.500" fill="#333"/><path d="M5.500 5.500l7 7M12.500 5.500l-7 7" stroke="#fff" stroke-width="2.500"/></svg></div>
<svg class="map" viewBox="-918 111 2943 2112" preserveAspectRatio="none">
<path class="land" d="M330 119 318 122 308 140 290 152 282 168 268 175 252 192 246 205 246 245 262 275 268 310 274 345 272 378 284 408 292 440 294 468 308 490 314 540 304 600 288 650 279 690 262 760 245 825 232 868 245 888 222 950 205 995 190 1040 176 1095 178 1108 155 1140 130 1165 105 1190 72 1197 90 1207 94 1250 80 1285 66 1313 66 1365 55 1400 42 1435 45 1463 75 1465 95 1473 115 1465 155 1468 166 1442 172 1417 186 1402 195 1417 209 1417 211 1438 200 1444 190 1458 180 1477 165 1484 145 1479 120 1475 135 1508 140 1545 130 1580 150 1573 180 1571 205 1555 220 1543 232 1554 245 1565 258 1590 264 1620 266 1645 262 1685 250 1725 232 1767 256 1775 262 1810 240 1950 205 2105 192 2138 207 2152 230 2133 255 2127 300 2118 330 2101 350 2105 375 2113 395 2108 418 2122 430 2115 460 2115 490 2131 530 2160 540 2165 555 2163 600 2128 640 2097 680 2080 705 2081 700 2045 692 2010 692 1985 686 1960 683 1945 668 1928 675 1908 685 1890 690 1865 697 1845 718 1832 735 1815 744 1795 750 1775 752 1753 785 1747 797 1729 810 1738 825 1741 833 1722 835 1705 842 1690 845 1675 850 1661 830 1664 818 1673 800 1675 785 1640 765 1614 745 1590 725 1570 730 1535 747 1498 741 1485 743 1460 765 1440 795 1415 800 1405 815 1397 815 1380 825 1365 837 1340 837 1325 830 1307 815 1298 795 1302 780 1300 783 1278 752 1263 745 1250 748 1230 727 1200 728 1160 700 1145 700 1135 680 1122 665 1105 655 1078 688 1080 715 1085 740 1077 775 1080 815 1077 822 1045 825 1020 840 1008 850 995 852 965 860 935 852 915 840 900 815 893 810 868 820 848 840 840 858 838 862 820 880 810 883 795 870 780 865 762 878 745 880 730 865 710 878 685 876 660 868 640 868 615 875 598 862 580 860 560 838 530 870 525 884 505 886 485 905 460 918 442 932 438 950 440 962 430 975 425 990 408 1000 385 1020 378 1022 358 1030 345 1053 303 1035 285 1025 272 1000 264 980 263 963 273 945 255 941 235 948 215 955 188 940 180 945 160 935 154 920 162 900 163 885 158 872 143 865 160 830 160 815 150 800 160 785 155 770 145 757 150 755 185 735 194 720 200 690 205 685 216 675 197 660 195 650 207 628 207 630 190 600 180 550 195 540 172 535 195 515 195 495 213 465 217 460 195 445 180 450 165 465 150 485 130 483 112 455 116 440 105 410 107 380 112 350 118Z"/>
<circle cx="40" cy="1176" r="10" fill="#f00"/>
<path d="M-286 1185-230 1715" stroke="#f00" stroke-width="20"/><path d="M-264 1719-194 1710-220 1806Z" fill="#f00"/>
</svg>
</section>

<section class="dock right">
<div class="dhead"><span>Identify Results</span><svg><use href="#float"/></svg><svg><use href="#close"/></svg></div>
<div class="dbar"><svg><use href="#form"/></svg><i class="sep"></i><svg><use href="#expand"/></svg><svg><use href="#collapse"/></svg><svg><use href="#expstar"/></svg><i class="sep"></i><svg><use href="#desel"/></svg><i class="sep"></i><svg><use href="#copy"/></svg><svg class="dis"><use href="#print"/></svg><i class="sep"></i><svg><use href="#identsel"/></svg><i class="dn"></i><svg><use href="#wrench"/></svg><i class="sep"></i><svg><use href="#help"/></svg></div>
<div class="res">
<div class="rr hd"><span>Feature</span><span>Value</span></div>
<div class="rr"><span><i class="dn"></i><b>smallholding — portugal</b></span></div>
<div class="rr cursel i1"><span><i class="dn"></i>fid</span><span>1</span></div>
<div class="rr i2"><span><i class="rt"></i>(Derived)</span></div>
<div class="rr i2 alt"><span><i class="rt"></i>(Actions)</span></div>
<div class="rr i3"><span>fid</span><span>1</span></div>
<div class="rr i3 alt"><span>id</span><span>1</span></div>
<div class="rr i3"><span>uuid</span><span>20f2d4e6-a9dc-4324-a263-d7268706dc61</span></div>
<div class="rr i3 alt"><span>name</span><span>Portugal</span></div>
<div class="rr i3"><span>code</span><span>PT</span></div>
</div>
<div class="frow"><label>Mode</label><div class="combo"><span>Current Layer</span><i class="dn"></i></div></div>
<div class="frow view"><label>View</label><div class="combo off"><span>Tree</span><i class="dn dis"></i></div></div>
<div class="tabs rtabs"><span>Debugging/Development …</span><span>Br…</span><span class="act">Identify R…</span><span>Processing To…</span><span>Layer S…</span></div>
</section>
</main>

<footer class="status">
<div class="loc"><svg viewBox="0 0 14 14"><circle cx="6" cy="5.500" r="4" fill="none" stroke="#888" stroke-width="1.300"/><path d="M9 8.500l4 4.500" stroke="#888" stroke-width="1.600"/></svg>Type to locate (Ctrl+K)</div>
<span class="tipmsg">Toggles the editing state of the current layer</span>
<span class="lb w64">Coordinate</span><div class="inp coord">-293057,184269</div>
<svg class="si ext" viewBox="0 0 16 16"><path d="M3 3l9 11M7 2l6 8M2 8l6 7" stroke="#444" stroke-width="2"/><path d="M5 1l-3 5 8 9 4-3zM12 1l3 3M1 13h4M12 6l3-4" stroke="#777" fill="none"/></svg>
<span class="lb w32">Scale</span><div class="spin scale"><span>1:3132909</span><i class="ddn"><i class="dn"></i></i></div>
<svg class="si lock" viewBox="0 0 16 16"><path d="M4.500 8V5q0-4 3.500-4t3.500 4v3" fill="none" stroke="#888" stroke-width="1.800"/><rect x="2.500" y="7" width="11" height="8.500" rx="1" fill="#555"/></svg>
<span class="lb w56">Magnifier</span><div class="spin mag"><span>100%</span><i class="ud"></i></div>
<span class="lb w57">Rotation</span><div class="spin rotn"><span>0.0 °</span><i class="ud"></i></div>
<i class="cb ck"></i><span class="lb w56r">Render</span>
<svg class="si glb" viewBox="0 0 16 16"><path d="M8 1l6 4v6l-6 4-6-4V5z" fill="#ccc" stroke="#777"/><path d="M8 1v14M2 5h12M2 11h12M1 8h14M5 3v10M11 3v10" stroke="#777"/></svg>
<span class="lb w82">EPSG:3763</span>
<svg class="si" viewBox="0 0 16 16"><path d="M8 1q7 0 7 6.500 0 4-3 5.500v2.500L8.500 14Q1 14 1 7.500 1 1 8 1z" fill="#555"/><path d="M3.500 6.500h2v2h-2zM7 6.500h2v2H7zM10.500 6.500h2v2h-2z" fill="#fff"/></svg>
</footer>
<div class="desk"></div>

<div class="menu ctx">
<div><svg><use href="#zlay"/></svg><span><u>Z</u>oom to Layer(s)</span></div>
<div class="no"><svg><use href="#zsel"/></svg><span>Zoom to <u>S</u>election</span></div>
<div><svg><use href="#glass"/></svg><span>Show in <u>O</u>verview</span></div>
<div><i class="cb"></i><span>Show Feature <u>C</u>ount</span></div>
<div><svg><use href="#label2"/></svg><span>Show <u>L</u>abels</span></div>
<div><span>Copy Layer</span></div>
<div><span>Re<u>n</u>ame Layer</span></div>
<hr>
<div><svg><use href="#dup"/></svg><span><u>D</u>uplicate Layer</span></div>
<div><svg><use href="#remove"/></svg><span><u>R</u>emove Layer…</span></div>
<hr>
<div><span>Move to <u>T</u>op</span></div>
<hr>
<div><svg><use href="#table"/></svg><span>Open <u>A</u>ttribute Table</span></div>
<div><svg><use href="#pencil"/></svg><span>Toggle <u>E</u>diting</span></div>
<div><span><u>F</u>ilter…</span></div>
<div><span>C<u>h</u>ange Data Source…</span></div>
<hr>
<div><span>Set Layer Scale <u>V</u>isibility…</span></div>
<div><span>Layer CRS</span><i class="rt"></i></div>
<hr>
<div class="hot"><span>E<u>x</u>port</span><i class="rt"></i></div>
<hr>
<div><span>Styles</span><i class="rt"></i></div>
<div><span>Add Layer Notes…</span></div>
<div><span><u>P</u>roperties…</span></div>
</div>
<div class="menu sub">
<div class="hot"><span>Save Features <u>A</u>s…</span></div>
<div class="no"><span>Save <u>S</u>elected Features As…</span></div>
<div><span>Save as Layer <u>D</u>efinition File…</span></div>
<div><span>Save as <u>Q</u>GIS Layer Style File…</span></div>
</div>
</body>
</html>
```

FILE: styles.css
```css
* { box-sizing: border-box; }
body { margin: 0; width: 1920px; height: 993px; overflow: hidden; background: #efefef; font: 14.5px/17px "Noto Sans", "Open Sans", sans-serif; letter-spacing: .06px; color: #000; display: flex; flex-direction: column; white-space: nowrap; position: relative; }
.defs { position: absolute; }
svg { display: block; flex: none; }
i { font-style: normal; flex: none; }
u { text-decoration: underline; text-underline-offset: 2px; text-decoration-thickness: 1px; text-decoration-skip-ink: none; }
.abc { font: bold 8px "Noto Sans", sans-serif; letter-spacing: 0; fill: #333; }
.abc.red { fill: #e00; }
.t11 { font: 12px "Noto Sans", sans-serif; }
.b9 { font: bold 8px "Noto Sans", sans-serif; letter-spacing: 0; fill: #666; }
.ii { font: italic bold 15px "Liberation Serif", serif; fill: #fff; }
.bigA { font: bold 19px "Noto Sans", sans-serif; fill: #47729f; }
.T15 { font: bold 15px "Liberation Serif", serif; fill: #444; }
.eps { font: bold 20px "Noto Sans", sans-serif; fill: #6a3a7a; }
.q { font: 18px "Liberation Serif", serif; fill: #fff; }

.title { height: 36px; flex: none; background: #222; border-bottom: 1px solid #111; color: #fff; display: flex; align-items: center; justify-content: center; position: relative; }
.title b { letter-spacing: .05px; padding-bottom: 1px; }
.winclose { position: absolute; right: 7px; top: 6px; width: 22px; height: 22px; border-radius: 50%; background: #3a3a3a; display: grid; place-items: center; }
.winclose svg { width: 9px; height: 9px; }
.menubar { height: 22px; flex: none; border-bottom: 1px solid #d0d0d0; padding: 0 0 0 10px; display: grid; align-items: center; letter-spacing: 0; grid-template-columns: 62px 42px 48px 51px 71px 64px 59px 58px 77px 46px 51px 88px auto; }

.bar { height: 39px; flex: none; display: flex; align-items: center; background: linear-gradient(#f9f9f9, #eee); border-bottom: 1px solid #b4b4b4; }
.bar.last { height: 38px; }
.bar svg { width: 24px; height: 24px; margin: 0 4.5px; }
.dis { opacity: .38; filter: grayscale(.55); }
.grip { width: 16px; height: 18px; background: radial-gradient(circle, #aaa 35%, transparent 45%) 8px 0 / 3px 3px repeat-y, radial-gradient(circle, #aaa 35%, transparent 45%) 11px 0 / 3px 3px repeat-y; }
.grip.first { width: 12.5px; background-position: 4px 0, 7px 0; }
.grip.wide { width: 18px; }
.sep { width: 7px; height: 18px; border-left: 1px solid #ccc; margin-left: 3px; margin-right: -3px; }
.dn { width: 12px; height: 8px; background: #555; clip-path: polygon(17% 20%, 83% 20%, 50% 80%); }
.rt { width: 5px; height: 8px; background: #555; clip-path: polygon(0 0, 100% 50%, 0 100%); }
.on { width: 32px; height: 31px; background: #dcdcdc; border: 1px solid #aaa; border-radius: 2px; margin-right: 1px; display: grid; place-items: center; }
.on svg { margin: 0; }

.spin, .inp { height: 23px; border: 1px solid #b0b0b0; border-radius: 3px; background: #fff; display: flex; flex: none; }
.spin span { flex: 1; padding-left: 5px; align-self: center; }
.ud { width: 14px; border-left: 1px solid #b0b0b0; display: flex; flex-direction: column; align-items: center; justify-content: center; gap: 6px; }
.ud::before, .ud::after { content: ""; width: 7px; height: 4px; background: #555; clip-path: polygon(50% 0, 100% 100%, 0 100%); }
.ud::after { clip-path: polygon(0 0, 100% 0, 50% 100%); }
.off { color: #b0b0b0; }
.off .ud::before, .off .ud::after { background: #bbb; }
.combo { height: 25px; border: 1px solid #b0b0b0; border-radius: 3px; background: linear-gradient(#fff, #ededed); display: flex; align-items: center; padding: 0 5px; flex: none; }
.combo span { flex: 1; }
.tol { width: 104px; height: 24px; margin-right: 1px; background: #f0f0f0; }
.unit { width: 111px; }

.work { flex: none; height: 744px; display: flex; }
.dock { display: flex; flex-direction: column; }
.left { width: 307px; margin-right: 6px; }
.dhead { height: 20px; display: flex; align-items: center; gap: 3px; flex: none; padding: 0 3px 0 4px; }
.dhead span { flex: 1; letter-spacing: -.1px; }
.dhead svg { width: 11px; height: 11px; }
.dbar { height: 31px; display: flex; align-items: center; padding: 0 0 1px 3.5px; flex: none; }
.dbar svg { width: 16px; height: 16px; margin: 0 4.5px; }
.dbar .dn { margin: 0 -1px 0 0; }
.left .dbar .dn { margin-left: -1px; margin-right: 1px; }
.tree { height: 664px; border: 1px solid #b4b4b4; background: #fff; flex: none; }
.lay { height: 19px; display: flex; align-items: center; padding: 0 5px 1px 23px; }
.lay em, .lay b { font-weight: bold; flex: 1; padding-left: 6px; letter-spacing: -.13px; }
.lay em { color: #808080; letter-spacing: .1px; padding-left: 7px; }
.lay svg { width: 18px; height: 18px; background: #efefef; }
.cb { width: 14px; height: 14px; border: 1px solid #b8b8b8; background: #fff; }
.ck { position: relative; }
.ck::after { content: ""; position: absolute; left: 3px; top: 1px; width: 4.5px; height: 8px; border: solid #111; border-width: 0 2px 2px 0; transform: rotate(35deg); }
.sw { width: 16px; height: 16px; margin-left: 6px; border: 1px solid rgba(0,0,0,.35); }
.c1 { background: #e3b232; } .c2 { background: #e77148; } .c3 { background: #ff9e17; } .c4 { background: #8d5a99; }
.c5 { background: #987db7; } .c6 { background: #b7484b; } .c7 { background: #becf50; } .c8 { background: #91522d; }
.cursel { background: #308cc6; color: #fff; }
.tabs { display: flex; height: 27px; margin-top: 1px; align-items: flex-start; }
.tabs span { height: 25px; background: #dadada; border: 1px solid #b8b8b8; border-left-width: 0; border-radius: 0 0 3px 3px; display: grid; place-items: center; padding-bottom: 1px; flex: none; }
.tabs .act { height: 27px; background: #f6f6f6; border-top-color: #f6f6f6; border-left-width: 1px; padding: 0; }
.ltabs { background: linear-gradient(#b8b8b8, #b8b8b8) 0 0 / 100% 1px no-repeat; }
.ltabs span:nth-child(1) { width: 68px; } .ltabs span:nth-child(2) { width: 102px; } .ltabs span:nth-child(3) { width: 103px; }

.center { width: 983px; height: 744px; border: 1px solid #b4b4b4; border-top: 0; background: #fff; display: flex; flex-direction: column; }
.msg { height: 39px; margin: 0 -1px; padding: 0 22px 2px 10px; border: 1px solid #939f8f; border-top-width: 2px; background: #dff0d8; display: flex; align-items: center; flex: none; }
.msg > svg { width: 24px; height: 24px; margin-right: 9px; }
.msg b { letter-spacing: -.12px; margin-right: 4px; }
.msg span { letter-spacing: .02px; }
.msg a { color: #2b8c10; text-decoration: underline; margin-left: 4px; flex: 1; text-underline-offset: 2px; letter-spacing: -.01px; }
.msg .mx { width: 18px; height: 18px; margin: 0; }
.map { width: 981px; height: 704px; }
.land { fill: #df6828; stroke: #f00; stroke-width: 16; stroke-linejoin: round; }

.right { margin-left: 6px; width: 618px; }
.res { height: 596px; background: #fff; border: 1px solid #b4b4b4; flex: none; }
.rr { height: 17px; display: grid; grid-template-columns: 187px auto; align-items: center; }
.rr > span { display: flex; align-items: center; line-height: 16px; }
.rr > span:first-child { padding-left: 1px; }
.rr > span:nth-child(2) { padding-left: 4px; }
.rr .dn { margin-right: 3px; margin-left: -1px; }
.hd { height: 20px; background: linear-gradient(#fff, #ececec); border-bottom: 1px solid #b4b4b4; align-items: stretch; }
.hd > span:nth-child(2) { border-left: 1px solid #ccc; padding-left: 2px; }
.hd > span:first-child { padding-left: 2px; }
.rr b { letter-spacing: -.12px; }
.alt { background: #f6f6f6; }
.i1 > span:first-child { padding-left: 13px; }
.cursel .dn { background: #124; }
.i2 > span:first-child { padding-left: 28px; }
.i2 .rt { margin-right: 7px; }
.i3 > span:first-child { padding-left: 40px; }
.frow { height: 25px; margin: 5px 6px 0 4px; display: flex; align-items: center; gap: 8px; flex: none; }
.frow label { width: 39px; }
.frow .combo { width: 561px; }
.view { color: #b0b0b0; margin-top: 6px; gap: 7px; }
.view label { width: 34px; }
.view .combo { width: 86px; }
.rtabs { margin-top: 7px; }
.rtabs span:nth-child(1) { width: 217px; border-left-width: 1px; } .rtabs span:nth-child(2) { width: 61px; } .rtabs span:nth-child(3) { width: 113px; } .rtabs span:nth-child(4) { width: 136px; } .rtabs span:nth-child(5) { width: 91px; }

.status { height: 31px; flex: none; display: flex; align-items: center; padding: 0 8px 0 4px; font-size: 12px; letter-spacing: -.17px; }
.loc { width: 268px; height: 25px; border: 1px solid #b0b0b0; border-radius: 3px; background: #fff; color: #888; font-size: 14.3px; letter-spacing: -.1px; display: flex; align-items: center; gap: 7px; padding-left: 8px; }
.loc svg { width: 13px; height: 13px; }
.tipmsg { width: 769px; padding-left: 8px; }
.lb { flex: none; }
.w64 { width: 64px; }
.inp { width: 107px; align-items: center; padding-left: 8px; letter-spacing: -.15px; }
.si { width: 16px; height: 16px; }
.ext { margin: 0 13px 0 4px; }
.w32 { width: 32px; }
.scale { width: 97px; }
.ddn { width: 22px; border-left: 1px solid #b0b0b0; display: grid; place-items: center; }
.lock { margin: 0 7px 0 10px; }
.w56 { width: 56px; }
.mag, .rotn { width: 94px; }
.w57 { width: 57px; margin-left: 9px; }
.rotn { margin-right: 6px; }
.w56r { width: 55px; margin-left: 5px; }
.glb { margin-right: 3px; }
.w82 { width: 80px; }
.desk { flex: none; height: 5px; background: linear-gradient(90deg, #15110f, #231816 30%, #1a1316 50%, #2a1b17 80%, #22203a 88%, #151012); }

.menu { position: absolute; background: #fff; box-shadow: inset 0 0 0 1px #999, 1px 1px 3px rgba(0,0,0,.3); }
.menu div { height: 25px; display: flex; align-items: center; padding-left: 28px; padding-right: 5px; }
.menu div > span { flex: 1; }
.menu svg { width: 16px; height: 16px; margin-left: -21px; margin-right: 5px; }
.menu .cb { margin-left: -20px; margin-right: 6px; }
.menu hr { height: 1px; border: 0; background: #c2c2c2; margin: 0 5px 1px; }
.menu .hot { background: #308cc6; color: #fff; box-shadow: inset 0 0 0 1px #2a75a3; }
.menu .hot .rt { background: #cde; }
.menu .no { color: #bcbcbc; }
.menu .no svg { opacity: .4; }
.ctx { left: 185px; top: 409px; width: 275px; height: 512px; }
.sub { left: 460px; top: 819px; width: 267px; height: 100px; }
.sub div { padding-left: 27px; }
```
